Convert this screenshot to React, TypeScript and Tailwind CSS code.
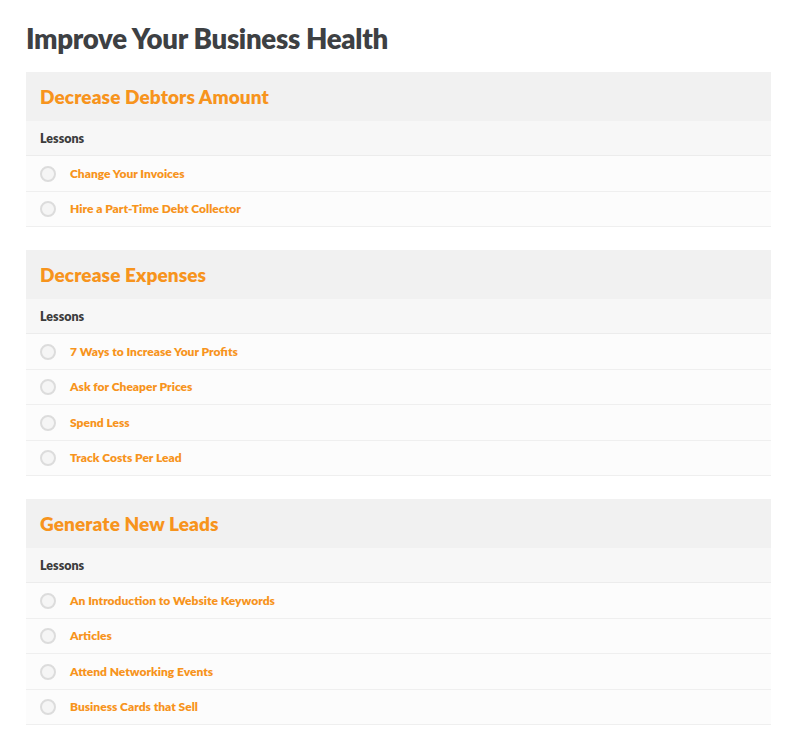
const sections = [
  {
    title: "Decrease Debtors Amount",
    lessons: ["Change Your Invoices", "Hire a Part-Time Debt Collector"],
  },
  {
    title: "Decrease Expenses",
    lessons: [
      "7 Ways to Increase Your Profits",
      "Ask for Cheaper Prices",
      "Spend Less",
      "Track Costs Per Lead",
    ],
  },
  {
    title: "Generate New Leads",
    lessons: [
      "An Introduction to Website Keywords",
      "Articles",
      "Attend Networking Events",
      "Business Cards that Sell",
    ],
  },
];

function Section({ title, lessons }: { title: string; lessons: string[] }) {
  return (
    <div className="flex flex-col">
      <div className="h-[49px] bg-[#f1f1f1] flex items-center px-[14px]">
        <h2 className="text-[19px] font-extrabold text-[#f7941d] leading-none tracking-[0.1px]">{title}</h2>
      </div>
      <div className="h-[35px] bg-[#f7f7f7] border-b border-[#ececec] flex items-center px-[14px] pt-[2px]">
        <span className="text-[12.5px] font-extrabold text-[#3c3c3c]">Lessons</span>
      </div>
      {lessons.map((l) => (
        <div
          key={l}
          className="h-[35.5px] bg-[#fcfcfc] border-b border-[#efefef] flex items-center pl-[14px] pt-[1px]"
        >
          <span className="w-[16px] h-[16px] rounded-full border-2 border-[#dcdcdc] bg-[#f5f5f5] shrink-0" />
          <a className="ml-[14px] text-[12px] font-extrabold text-[#f7941d]">{l}</a>
        </div>
      ))}
    </div>
  );
}

export default function App() {
  return (
    <div className="bg-white min-h-[729px] px-[26px] pt-[21px] font-['Lato','Open_Sans',sans-serif]">
      <h1 className="text-[27.6px] font-extrabold text-[#3d4043] leading-[36px] mb-[15px] tracking-[-0.3px]">
        Improve Your Business Health
      </h1>
      <div className="w-[745px] flex flex-col gap-[23px]">
        {sections.map((s) => (
          <Section key={s.title} {...s} />
        ))}
      </div>
    </div>
  );
}
